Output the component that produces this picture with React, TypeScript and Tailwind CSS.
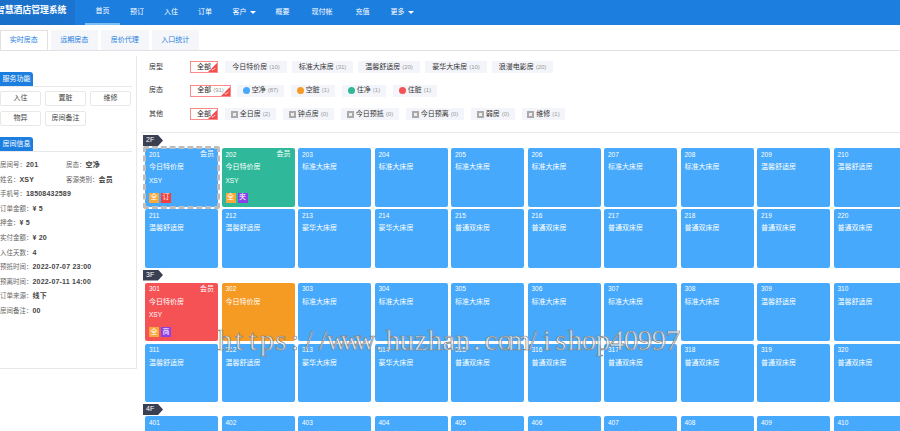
import React from 'react';

const navItems = [
  { label: '首页', cls: 'w-[35px] border-b-2 border-[#7cc0f5]' },
  { label: '预订', cls: 'w-[34px]' },
  { label: '入住', cls: 'w-[34px]' },
  { label: '订单', cls: 'w-[34px]' },
  { label: '客户', cls: 'w-[44px]', arrow: true },
  { label: '概要', cls: 'w-[33px]' },
  { label: '现付帐', cls: 'w-[46px]' },
  { label: '充值', cls: 'w-[35px]' },
  { label: '更多', cls: 'w-[44px]', arrow: true },
];

const tabs = ['实时房态', '远期房态', '房价代理', '入口统计'];

const typeChips = [
  { label: '今日特价房', count: 10, cls: 'w-[62px]' },
  { label: '标准大床房', count: 31, cls: 'w-[61px]' },
  { label: '温馨舒适房', count: 20, cls: 'w-[62px]' },
  { label: '豪华大床房', count: 10, cls: 'w-[62px]' },
  { label: '浪漫电影房', count: 20, cls: 'w-[61px]' },
];

const statusChips = [
  { label: '空净', count: 87, dot: 'bg-[#46a9fb]', cls: 'w-[47px]' },
  { label: '空脏', count: 1, dot: 'bg-[#f59a23]', cls: 'w-[44px]' },
  { label: '住净', count: 1, dot: 'bg-[#2fb99a]', cls: 'w-[44px]' },
  { label: '住脏', count: 1, dot: 'bg-[#f55256]', cls: 'w-[44px]' },
];

const otherChips = [
  { label: '全日房', count: 2, cls: 'w-[51px]' },
  { label: '钟点房', count: 0, cls: 'w-[51px]' },
  { label: '今日预抵', count: 0, cls: 'w-[58px]' },
  { label: '今日预离', count: 0, cls: 'w-[58px]' },
  { label: '弱房', count: 0, cls: 'w-[44px]' },
  { label: '维修', count: 1, cls: 'w-[43px]' },
];

const guestInfo = [
  ['手机号：', '18508432589'],
  ['订单金额：', '¥ 5'],
  ['押金：', '¥ 5'],
  ['实付金额：', '¥ 20'],
  ['入住天数：', '4'],
  ['预抵时间：', '2022-07-07 23:00'],
  ['预离时间：', '2022-07-11 14:00'],
  ['订单来源：', '线下'],
  ['房间备注：', '00'],
];

type Room = {
  no: number;
  name: string;
  color?: string;
  member?: boolean;
  guest?: boolean;
  badge?: [string, string];
  selected?: boolean;
};

const floor = (base: number, names: string[]): Room[] =>
  names.map((name, i) => ({ no: base + i + 1, name }));

const t = '今日特价房';
const b = '标准大床房';
const w = '温馨舒适房';
const h = '豪华大床房';
const p = '普通双床房';

const floor2 = floor(200, [t, t, b, b, b, b, b, b, w, w, w, w, h, h, p, p, p, p, p, p]);
floor2[0] = { ...floor2[0], member: true, guest: true, badge: ['订', 'bg-[#f43f3f]'], selected: true };
floor2[1] = { ...floor2[1], member: true, guest: true, badge: ['夹', 'bg-[#8b3fe8]'], color: 'bg-[#2fb99a]' };

const floor3 = floor(300, [t, t, b, b, b, b, b, b, w, w, w, w, h, h, p, p, p, p, p, p]);
floor3[0] = { ...floor3[0], member: true, guest: true, badge: ['商', 'bg-[#8b3fe8]'], color: 'bg-[#f55256]' };
floor3[1] = { ...floor3[1], color: 'bg-[#f59a23]' };

const floor4 = floor(400, [t, t, b, b, b, b, b, b, w, w]);

const watermark = 'https://www.huzhan.com/ishop40997';

const Caret = () => (
  <span className="ml-[3px] inline-block h-0 w-0 border-x-[3px] border-t-[3px] border-x-transparent border-t-white" />
);

const AllButton = ({ count, cls }: { count?: number; cls: string }) => (
  <div className={`relative flex h-[12px] items-center justify-center gap-[2px] overflow-hidden border border-[#f98b8b] text-[7px] text-[#222] ${cls}`}>
    全部
    {count !== undefined && <Count n={count} />}
    <span className="absolute bottom-0 right-0 h-0 w-0 border-b-[9px] border-l-[9px] border-b-[#f44b4b] border-l-transparent" />
    <svg className="absolute bottom-[1px] right-[1px]" width="5" height="4" viewBox="0 0 5 4" fill="none">
      <path d="M0.5 2 L2 3.3 L4.5 0.8" stroke="#fff" strokeWidth="0.8" />
    </svg>
  </div>
);

const Chip = ({ cls, children }: { cls: string; children: React.ReactNode }) => (
  <div className={`flex h-[12px] items-center justify-center gap-[2px] rounded-[1px] bg-[#f3f5fa] text-[7px] text-[#333] ${cls}`}>
    {children}
  </div>
);

const Count = ({ n }: { n: number }) => <span className="text-[6px] text-[#999]">({n})</span>;

const FilterRow = ({ label, children }: { label: string; children: React.ReactNode }) => (
  <div className="flex h-[12px] items-center">
    <span className="w-[49px] pl-[8px] text-[7px] text-[#333]">{label}</span>
    {children}
  </div>
);

const SectionTitle = ({ label }: { label: string }) => (
  <div className="border-b border-[#e8e8e8]">
    <div className="flex h-[14px] w-[33px] items-center justify-center rounded-tr-[3px] bg-[#1c7edf] text-[7px] text-white">
      {label}
    </div>
  </div>
);

const ActionButton = ({ label }: { label: string }) => (
  <div className="flex h-[15px] w-[41px] items-center justify-center rounded-[2px] border border-[#e8e8e8] text-[7px] text-[#444]">
    {label}
  </div>
);

const Info = ({ k, v, cls }: { k: string; v: string; cls?: string }) => (
  <div className={`flex items-center whitespace-nowrap ${cls ?? ''}`}>
    <span className="text-[#666]">{k}</span>
    <span className="whitespace-pre text-[7px] font-bold tracking-[0.2px] text-[#444]">{v}</span>
  </div>
);

const FloorTag = ({ label }: { label: string }) => (
  <div className="ml-[6px] flex h-[11px] w-[20px] items-center pl-[3px] text-[7px] text-white bg-[#3a3f52] [clip-path:polygon(0_0,75%_0,100%_50%,75%_100%,0_100%)]">
    {label}
  </div>
);

const RoomCard = ({ room }: { room: Room }) => (
  <div className={`relative h-[58.5px] rounded-[2px] px-[4px] text-[7px] text-white ${room.color ?? 'bg-[#46a9fb]'}`}>
    {room.selected && (
      <span className="absolute -inset-[2px] rounded-[3px] border-[3px] border-dashed border-[#bdbdbd]" />
    )}
    <div className="flex h-[13px] items-center justify-between">
      <span className="text-[6.5px]">{room.no}</span>
      {room.member && <span>会员</span>}
    </div>
    <div className="flex h-[13px] items-center whitespace-nowrap">{room.name}</div>
    {room.guest && <div className="flex h-[13px] items-center text-[6.5px]">XSY</div>}
    {room.badge && (
      <div className="absolute bottom-[4px] left-[4px] flex gap-[2px]">
        <span className="flex h-[10px] w-[10px] items-center justify-center bg-[#f9a83c] text-[7px]">全</span>
        <span className={`flex h-[10px] w-[10px] items-center justify-center text-[7px] ${room.badge[1]}`}>
          {room.badge[0]}
        </span>
      </div>
    )}
  </div>
);

const RoomGrid = ({ rooms }: { rooms: Room[] }) => (
  <div className="ml-[8px] grid w-max grid-cols-[repeat(10,73px)] gap-x-[3.5px] gap-y-[2.5px]">
    {rooms.map((room) => (
      <RoomCard key={room.no} room={room} />
    ))}
  </div>
);

export default function App() {
  return (
    <div className="relative h-[431px] w-[900px] overflow-hidden bg-white font-['Liberation_Sans','Noto_Sans_CJK_SC',sans-serif]">
      {/* top bar */}
      <header className="flex h-[25px] bg-[#1c7edf] text-white">
        <div className="flex w-[75px] items-center overflow-hidden bg-gradient-to-r from-[#1a70c8] to-[#1b74d0]">
          <span className="-ml-[4px] -mt-[3px] whitespace-nowrap text-[8.8px] font-bold">智慧酒店管理系统</span>
        </div>
        <nav className="ml-[10px] flex">
          {navItems.map((item) => (
            <div key={item.label} className={`flex items-center justify-center text-[7px] ${item.cls}`}>
              {item.label}
              {item.arrow && <Caret />}
            </div>
          ))}
        </nav>
      </header>

      {/* tabs */}
      <div className="mt-[5px] flex h-[21px] gap-[3px] border-b border-[#e2e2e2] text-[7px] text-[#1c7edf]">
        {tabs.map((tab, i) => (
          <div
            key={tab}
            className={`flex h-[20px] w-[47.5px] items-center justify-center ${
              i === 0 ? 'border border-b-0 border-[#e2e2e2] bg-white' : 'bg-[#f4f6fa]'
            }`}
          >
            {tab}
          </div>
        ))}
      </div>

      <div className="mt-[5px] flex">
        {/* left panel */}
        <aside className="h-[313px] w-[137px] shrink-0 border-b border-r border-[#e8e8e8] pr-[4px] pt-[16px]">
          <SectionTitle label="服务功能" />
          <div className="mt-[4px] flex flex-wrap gap-x-[4px] gap-y-[5px]">
            {['入住', '置脏', '维修', '物异', '房间备注'].map((label) => (
              <ActionButton key={label} label={label} />
            ))}
          </div>
          <div className="mt-[11px]">
            <SectionTitle label="房间信息" />
          </div>
          <div className="mt-[6px] flex flex-col text-[6.5px] leading-[14.6px]">
            <div className="flex">
              <Info k="房间号：" v="201" cls="w-[66px]" />
              <Info k="房态：" v="空净" />
            </div>
            <div className="flex">
              <Info k="姓名：" v="XSY" cls="w-[66px]" />
              <Info k="客源类别：" v="会员" />
            </div>
            {guestInfo.map(([k, v]) => (
              <Info key={k} k={k} v={v} />
            ))}
          </div>
        </aside>

        {/* main */}
        <main className="min-w-0 flex-1">
          <div className="ml-[4px] flex h-[77px] flex-col gap-[11.5px] border-b border-[#e8e8e8] pt-[5px]">
            <FilterRow label="房型">
              <AllButton cls="w-[28px]" />
              <div className="ml-[7px] flex gap-[5px]">
                {typeChips.map((c) => (
                  <Chip key={c.label} cls={c.cls}>
                    {c.label} <Count n={c.count} />
                  </Chip>
                ))}
              </div>
            </FilterRow>
            <FilterRow label="房态">
              <AllButton count={91} cls="w-[41px]" />
              <div className="ml-[6px] flex gap-[7px]">
                {statusChips.map((c) => (
                  <Chip key={c.label} cls={c.cls}>
                    <span className={`h-[7px] w-[7px] rounded-full ${c.dot}`} />
                    {c.label} <Count n={c.count} />
                  </Chip>
                ))}
              </div>
            </FilterRow>
            <FilterRow label="其他">
              <AllButton cls="w-[28px]" />
              <div className="ml-[7px] flex gap-[7px]">
                {otherChips.map((c) => (
                  <Chip key={c.label} cls={c.cls}>
                    <span className="flex h-[7px] w-[7px] items-center justify-center bg-[#aaa]">
                      <span className="h-[3px] w-[3px] bg-[#eee]" />
                    </span>
                    {c.label} <Count n={c.count} />
                  </Chip>
                ))}
              </div>
            </FilterRow>
          </div>

          <div className="mt-[2px] flex flex-col">
            <FloorTag label="2F" />
            <div className="mt-[2px]">
              <RoomGrid rooms={floor2} />
            </div>
            <div className="mt-[2px]">
              <FloorTag label="3F" />
            </div>
            <div className="mt-[2px]">
              <RoomGrid rooms={floor3} />
            </div>
            <div className="mt-[2px]">
              <FloorTag label="4F" />
            </div>
            <div className="mt-[1px]">
              <RoomGrid rooms={floor4} />
            </div>
          </div>
        </main>
      </div>

      {/* site watermark over the page */}
      <div className="pointer-events-none absolute left-[218px] top-[324px] flex font-['Liberation_Serif',serif] text-[29px] leading-[32px] text-white/70 [-webkit-text-stroke:0.7px_#808080]">
        {watermark.split('').map((ch, i) => (
          <span key={i} className="flex w-[14px] justify-center">
            {ch}
          </span>
        ))}
      </div>
    </div>
  );
}
